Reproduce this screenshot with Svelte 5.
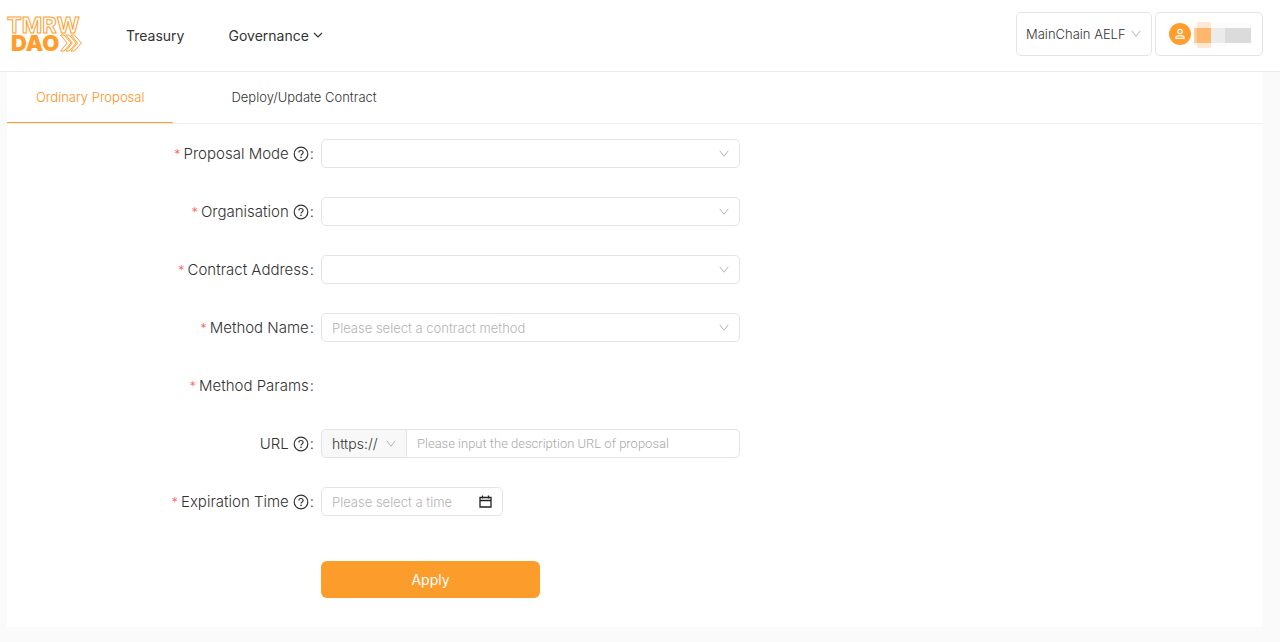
<script>
    const chains = ['MainChain AELF', 'SideChain tDVV'];
    const fields = [
        {id: 'mode', label: 'Proposal Mode', required: true, help: true, type: 'select', placeholder: ''},
        {id: 'organisation', label: 'Organisation', required: true, help: true, type: 'select', placeholder: ''},
        {id: 'contract', label: 'Contract Address', required: true, help: false, type: 'select', placeholder: ''},
        {id: 'method', label: 'Method Name', required: true, help: false, type: 'select', placeholder: 'Please select a contract method'},
        {id: 'params', label: 'Method Params', required: true, help: false, type: 'none'},
        {id: 'url', label: 'URL', required: false, help: true, type: 'url', placeholder: 'Please input the description URL of proposal'},
        {id: 'time', label: 'Expiration Time', required: true, help: true, type: 'time', placeholder: 'Please select a time'},
    ];
    const tabs = ['Ordinary Proposal', 'Deploy/Update Contract'];

    let chain = chains[0];
    let activeTab = 0;
    let protocol = 'https://';
</script>

{#snippet arrow()}
    <svg class="arrow" viewBox="0 0 10 10" width="10" height="10" aria-hidden="true">
        <path d="M.8 1.800 5 7.300 9.200 1.800" fill="none" stroke="currentColor" stroke-width="1"/>
    </svg>
{/snippet}

<header>
    <a class="logo" href="/">
        <span class="logo-top">TMRW</span>
        <span class="logo-bottom">
            DAO
            <svg width="22" height="18" viewBox="0 0 22 18" aria-hidden="true">
                <g fill="#fff" stroke="#ff9e2c" stroke-width="1" stroke-linejoin="round">
                    <path d="M.6 1h3.400l7 8-7 8h-3.400l6.500-8z"/>
                    <path d="M5.800 1h3.400l7 8-7 8h-3.400l6.500-8z"/>
                    <path d="M11 1h3.400l7 8-7 8h-3.400l6.500-8z"/>
                </g>
            </svg>
        </span>
    </a>
    <nav>
        <a href="#treasury">Treasury</a>
        <a href="#governance">
            Governance
            <svg width="10" height="10" viewBox="0 0 10 10" aria-hidden="true">
                <path d="M1 3l4 4 4-4" fill="none" stroke="currentColor" stroke-width="1.200"/>
            </svg>
        </a>
    </nav>
    <div class="select chain">
        <select aria-label="Chain" bind:value={chain}>
            {#each chains as c}
                <option>{c}</option>
            {/each}
        </select>
        {@render arrow()}
    </div>
    <button class="account" type="button" aria-label="Account">
        <svg width="22" height="22" viewBox="0 0 22 22">
            <circle cx="11" cy="11" r="11" fill="#ff9e2c"/>
            <circle cx="11" cy="8.500" r="2.200" fill="none" stroke="#fff" stroke-width="1.200"/>
            <path d="M6.800 15.400v-.6c0-1.400 2-2.200 4.200-2.200s4.200.8 4.200 2.200v.6z" fill="none" stroke="#fff" stroke-width="1.200" stroke-linejoin="round"/>
        </svg>
        <!-- masked account name -->
        <svg width="58" height="28" viewBox="0 0 58 28" shape-rendering="crispEdges">
            <path d="M0 3h57v23H0z" fill="#fcfcfc"/>
            <path d="M0 3h3v23H0z" fill="#fff7f0"/>
            <path d="M3 2h14v26H3z" fill="#ffe8d4"/>
            <path d="M0 8h3v15H0z" fill="#ffcd9c"/>
            <path d="M3 8h14v15H3z" fill="#ffb76d"/>
            <path d="M17 8h14v15H17z" fill="#ebebeb"/>
            <path d="M31 8h26v15H31z" fill="#dbdbdb"/>
        </svg>
    </button>
</header>

<main>
    <div class="tabs" role="tablist">
        {#each tabs as tab, i}
            <button type="button" role="tab" aria-selected={activeTab === i} class:active={activeTab === i}
                    on:click={() => activeTab = i}>{tab}</button>
        {/each}
    </div>
    <form on:submit|preventDefault>
        {#each fields as f}
            <div class="row">
                <label for={f.id}>
                    {#if f.required}<span class="star">*</span>{/if}
                    <span>{f.label}</span>
                    {#if f.help}
                        <svg class="help" width="16" height="16" viewBox="0 0 16 16" aria-hidden="true">
                            <circle cx="8" cy="8" r="6.800" fill="none" stroke="currentColor" stroke-width="1.200"/>
                            <path d="M5.900 6.500c0-1.300.9-2 2.100-2s2.100.8 2.100 1.900c0 1.500-2.100 1.500-2.100 3.100" fill="none" stroke="currentColor" stroke-width="1.200"/>
                            <circle cx="8" cy="11.400" r=".8" fill="currentColor"/>
                        </svg>
                    {/if}
                    <span class="colon">:</span>
                </label>
                {#if f.type === 'select'}
                    <div class="select">
                        <select id={f.id} class="empty">
                            <option value="">{f.placeholder}</option>
                        </select>
                        {@render arrow()}
                    </div>
                {:else if f.type === 'url'}
                    <div class="group">
                        <div class="select protocol">
                            <select aria-label="Protocol" bind:value={protocol}>
                                <option>https://</option>
                                <option>http://</option>
                            </select>
                            {@render arrow()}
                        </div>
                        <input id={f.id} type="text" placeholder={f.placeholder}>
                    </div>
                {:else if f.type === 'time'}
                    <div class="picker">
                        <input id={f.id} type="text" placeholder={f.placeholder}>
                        <svg width="13" height="13" viewBox="0 0 13 13" aria-hidden="true">
                            <path d="M1 2.500h11v9.500H1zM1 5.500h11M3.500.5v3M9.500.5v3" fill="none" stroke="#222" stroke-width="1.300"/>
                        </svg>
                    </div>
                {:else}
                    <output id={f.id}></output>
                {/if}
            </div>
        {/each}
        <div class="row submit">
            <button type="submit">Apply</button>
        </div>
    </form>
</main>

<style>
    :global(body) {
        background: #fafafa;
        color: #333;
        font-family: Inter, "Liberation Sans", sans-serif;
        font-size: 15px;
        font-weight: 300;
    }

    header {
        display: flex;
        align-items: center;
        box-sizing: border-box;
        height: 72px;
        padding: 0 17px 3px 7px;
        background: #fff;
        border-bottom: 1px solid #ececec;
    }

    .logo {
        display: flex;
        flex-direction: column;
        width: 76px;
        color: #ff9e2c;
        font-size: 22px;
        line-height: 18px;
        text-decoration: none;
    }

    .logo-top {
        color: #fff;
        font-weight: 700;
        -webkit-text-stroke: 1px #ff9e2c;
    }

    .logo-bottom {
        display: flex;
        align-items: center;
        gap: 1px;
        padding-left: 4px;
        font-weight: 900;
    }

    nav {
        display: flex;
        flex: 1;
        gap: 44px;
        margin-left: 43px;
        padding-top: 2px;
        font-size: 14px;
        font-weight: 400;
    }

    nav a {
        display: flex;
        align-items: center;
        gap: 4px;
        color: #333;
        text-decoration: none;
    }

    select, input, button {
        box-sizing: border-box;
        font: inherit;
        color: inherit;
        outline: none;
    }

    /* select with its own arrow */
    .select {
        position: relative;
    }

    select {
        width: 100%;
        height: 29px;
        padding: 0 24px 0 10px;
        appearance: none;
        background: #fff;
        border: 1px solid #e4e4e4;
        border-radius: 5px;
        font-size: 13px;
    }

    select.empty {
        color: #b4b4b4;
    }

    .arrow {
        position: absolute;
        top: 0;
        bottom: 0;
        right: 11px;
        margin: auto;
        color: #b4b4b4;
        pointer-events: none;
    }

    .chain {
        width: 136px;
    }

    .chain select {
        height: 44px;
        padding-left: 9px;
    }

    .account {
        display: flex;
        align-items: center;
        gap: 3px;
        height: 44px;
        margin-left: 3px;
        padding: 0 10px 0 13px;
        background: #fff;
        border: 1px solid #e4e4e4;
        border-radius: 5px;
    }

    main {
        margin: 0 17px 15px 7px;
        background: #fff;
    }

    .tabs {
        display: flex;
        gap: 29px;
        border-bottom: 1px solid #f0f0f0;
    }

    .tabs button {
        height: 51px;
        padding: 0 29px;
        background: none;
        border: 0;
        border-bottom: 1px solid transparent;
        font-size: 13px;
    }

    .tabs .active {
        color: #ff9020;
        border-color: #ff9e2c;
    }

    form {
        display: flex;
        flex-direction: column;
        gap: 29px;
        padding: 15px 0 29px;
    }

    .row {
        display: grid;
        grid-template-columns: 3fr 4fr 5fr;
        align-items: center;
        min-height: 29px;
    }

    label {
        display: flex;
        align-items: center;
        justify-content: flex-end;
        padding-right: 7px;
    }

    .star {
        margin-right: 3px;
        color: #ff5c5c;
        font-size: 13px;
    }

    .help {
        margin-left: 4px;
    }

    .colon {
        margin-left: 1px;
    }

    .group {
        display: flex;
    }

    .protocol {
        width: 86px;
    }

    .protocol select {
        background: #f8f8f8;
        border-radius: 5px 0 0 5px;
        font-size: 14px;
    }

    input {
        height: 29px;
        padding: 0 10px;
        background: #fff;
        border: 1px solid #e4e4e4;
        border-radius: 5px;
        font-size: 13px;
    }

    input::placeholder {
        color: #b4b4b4;
        opacity: 1;
    }

    .group input {
        flex: 1;
        min-width: 0;
        border-left: 0;
        border-radius: 0 5px 5px 0;
        font-family: Roboto, sans-serif;
    }

    .group input::placeholder {
        color: #a8a8a8;
    }

    .picker {
        display: flex;
        align-items: center;
        box-sizing: border-box;
        width: 182px;
        height: 29px;
        padding-right: 10px;
        border: 1px solid #e4e4e4;
        border-radius: 5px;
    }

    .picker input {
        flex: 1;
        min-width: 0;
        height: 27px;
        border: 0;
    }

    .submit {
        margin-top: 16px;
    }

    .submit button {
        grid-column: 2;
        width: 219px;
        height: 37px;
        background: #fc9d2b;
        border: 0;
        border-radius: 6px;
        color: #fff;
        font-size: 14px;
        font-weight: 400;
    }
</style>
